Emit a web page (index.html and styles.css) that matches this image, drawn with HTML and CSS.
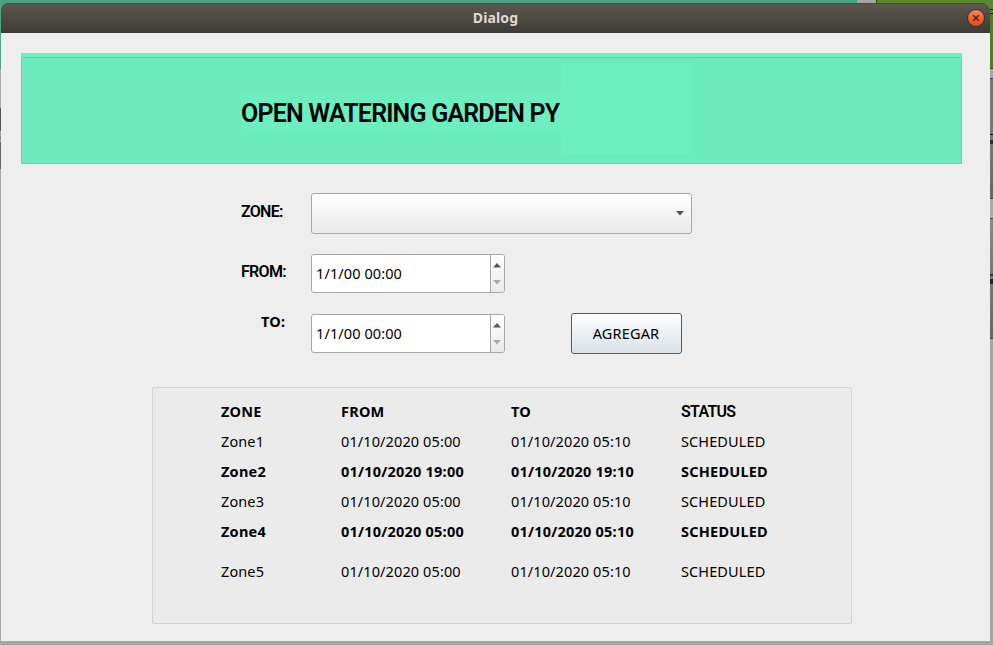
FILE: index.html
```
<!DOCTYPE html>
<html lang="en">
<head>
<meta charset="utf-8">
<title>Dialog</title>
<link rel="stylesheet" href="styles.css">
</head>
<body>
<div class="desktop">
  <div class="edge-left"></div>
  <main class="window">
    <header class="titlebar">
      <span class="window-title">Dialog</span>
      <button class="close" aria-label="Close"><svg width="8" height="8" viewBox="0 0 8 8"><path d="M1.2 1.2 6.8 6.8M6.8 1.2 1.2 6.8" stroke="#5b2410" stroke-width="1.5"/></svg></button>
    </header>
    <div class="content">
      <section class="banner">
        <div class="banner-frame">
          <h1 class="brand"><span class="brand-text">OPEN WATERING GARDEN PY</span></h1>
          <div class="logo-slot"></div>
        </div>
      </section>
      <form class="form">
        <div class="field zone-field">
          <label class="label zone-label">ZONE:</label>
          <div class="combo"><svg width="8" height="5" viewBox="0 0 8 5"><path d="M0 0H8L4 4.5Z" fill="#555"/></svg></div>
        </div>
        <div class="field">
          <label class="label from-label">FROM:</label>
          <div class="spin"><span class="value">1/1/00 00:00</span><span class="arrows"><svg width="8" height="5" viewBox="0 0 8 5"><path d="M0 4.5H8L4 0Z" fill="#555"/></svg><svg width="8" height="5" viewBox="0 0 8 5"><path d="M0 0H8L4 4.5Z" fill="#aaa"/></svg></span></div>
        </div>
        <div class="field">
          <label class="label to-label">TO:</label>
          <div class="spin"><span class="value">1/1/00 00:00</span><span class="arrows"><svg width="8" height="5" viewBox="0 0 8 5"><path d="M0 4.5H8L4 0Z" fill="#555"/></svg><svg width="8" height="5" viewBox="0 0 8 5"><path d="M0 0H8L4 4.5Z" fill="#aaa"/></svg></span></div>
          <button class="add" type="button">AGREGAR</button>
        </div>
      </form>
      <section class="schedule">
        <div class="row bold head"><span>ZONE</span><span>FROM</span><span>TO</span><span class="status-head">STATUS</span></div>
        <div class="row"><span>Zone1</span><span>01/10/2020 05:00</span><span>01/10/2020 05:10</span><span>SCHEDULED</span></div>
        <div class="row bold"><span>Zone2</span><span>01/10/2020 19:00</span><span>01/10/2020 19:10</span><span>SCHEDULED</span></div>
        <div class="row"><span>Zone3</span><span>01/10/2020 05:00</span><span>01/10/2020 05:10</span><span>SCHEDULED</span></div>
        <div class="row bold"><span>Zone4</span><span>01/10/2020 05:00</span><span>01/10/2020 05:10</span><span>SCHEDULED</span></div>
        <div class="row last"><span>Zone5</span><span>01/10/2020 05:00</span><span>01/10/2020 05:10</span><span>SCHEDULED</span></div>
      </section>
    </div>
  </main>
  <div class="edge-right"></div>
</div>
</body>
</html>
```
FILE: styles.css
```
* { box-sizing: border-box; }
body {
  margin: 0;
  width: 993px;
  height: 645px;
  overflow: hidden;
  font-family: "Noto Sans", sans-serif;
  font-size: 14.5px;
  color: #000;
}
.desktop {
  display: grid;
  grid-template-columns: 1px 989px 3px;
  grid-template-rows: 638px;
  height: 645px;
  padding-top: 3px;
  background:
    linear-gradient(90deg, #4aa584 857px, #a6a6a6 857px 876px, #284d10 876px 877px, #55892a 877px) 0 0 / 100% 14px no-repeat,
    #a5a5a5;
}
.edge-left {
  background: linear-gradient(#4aa584 66px, #aaa 66px 105px, #555 105px 128px, #b39a83 128px 133px, #6e8aa8 133px 137px, #aaa 137px 139px, #666 139px 166px, #a5a5a5 166px);
}
.edge-right {
  background: linear-gradient(#55892a 6px, #111 6px 7px, #55892a 7px 10px, #111 10px 11px, #4f7d26 11px 65px, #284d10 65px 66px, #a6a6a6 66px 75px, #444 75px 76px, #777 76px 131px, #111 131px 132px, #777 132px 137px, #16344f 137px 141px, #777 141px 142px, #666 195px, #444 195px 196px, #aaa 196px 215px, #444 215px 216px, #888 216px, #777 271px, #16344f 271px 273px, #777 273px 276px, #222 276px 281px, #777 281px, #666 335px, #444 335px 336px, #a5a5a5 336px);
}
.window {
  border-radius: 6px 6px 0 0;
  background: #eee;
  overflow: hidden;
}
.titlebar {
  height: 30px;
  display: grid;
  grid-template-columns: 26px 1fr 26px;
  align-items: center;
  justify-items: center;
  padding-bottom: 1px;
  background: linear-gradient(#5c584f, #3d3b36);
  border-top: 1px solid #48473f;
}
.window-title {
  grid-column: 2;
  font-size: 14px;
  line-height: 26px;
  font-weight: 700;
  letter-spacing: 0.15px;
  color: #dfdbd2;
}
.close {
  display: flex;
  align-items: center;
  justify-content: center;
  width: 18px;
  height: 18px;
  margin-right: 2px;
  padding: 0;
  border: 1px solid #35322d;
  border-radius: 50%;
  background: linear-gradient(#f58560, #ef6236 50%, #e14d1c);
}
.content { padding: 20px 28px 0 20px; }
.banner {
  height: 111px;
  padding-top: 4px;
  background: #6cf0c0;
}
.banner-frame {
  height: 107px;
  display: flex;
  padding: 5px 0 0 219px;
  border: 1px solid #62d2ab;
  border-radius: 2px;
  background: #6cebbf;
}
.brand {
  width: 320px;
  height: 41px;
  margin: 30px 0 0;
  background: #6ceec0;
  font: 600 25px/41px Roboto, sans-serif;
  letter-spacing: -0.8px;
  white-space: nowrap;
}
.logo-slot {
  width: 131px;
  height: 91px;
  background: #6cefc1;
}
.form {
  display: grid;
  row-gap: 20px;
  padding: 29px 0 0 220px;
}
.field {
  display: flex;
  height: 40px;
  align-items: flex-start;
}
.zone-field { height: 41px; }
.label { width: 70px; }
.zone-label, .from-label {
  font: 600 16px/37px Roboto, sans-serif;
  letter-spacing: -0.7px;
}
.from-label { line-height: 36px; }
.to-label {
  width: 50px;
  margin-left: 20px;
  line-height: 15px;
  font-weight: 700;
  letter-spacing: 0.2px;
}
.combo {
  width: 381px;
  height: 41px;
  display: flex;
  align-items: center;
  justify-content: flex-end;
  padding-right: 7px;
  border: 1px solid #a8a8a8;
  border-radius: 3px;
  background: linear-gradient(#fff, #eaeaea);
}
.spin {
  display: flex;
  width: 194px;
  height: 39px;
  border: 1px solid #a8a8a8;
  border-radius: 3px;
  background: #fff;
  overflow: hidden;
}
.value {
  flex: 1;
  padding-left: 4px;
  line-height: 36px;
  letter-spacing: 0.1px;
}
.arrows {
  width: 14px;
  display: flex;
  flex-direction: column;
  align-items: flex-start;
  gap: 12px;
  padding: 8px 0 0 2px;
  border-left: 1px solid #a8a8a8;
  background: linear-gradient(#fff, #eaeaea);
}
.add {
  width: 111px;
  height: 41px;
  margin: -1px 0 0 66px;
  padding: 0 1px 1px 0;
  border: 1px solid #1f6a9c;
  border-radius: 3px;
  background: linear-gradient(#fdfeff, #dae2e8);
  color: #000;
  font: 14.5px "Noto Sans", sans-serif;
  letter-spacing: 0.15px;
}
.schedule {
  width: 700px;
  height: 237px;
  margin: 33px 0 0 131px;
  padding: 8px 0 0 68px;
  border: 1px solid #d3d3d3;
  border-radius: 2px;
  background: #ebebeb;
}
.row {
  display: grid;
  grid-template-columns: 120px 170px 170px 1fr;
  height: 30px;
  line-height: 30px;
  white-space: nowrap;
  letter-spacing: 0.11px;
}
.bold {
  font-weight: 700;
  letter-spacing: 0.22px;
}
.last { margin-top: 10px; }
.status-head {
  font: 600 16px/31px Roboto, sans-serif;
  letter-spacing: -0.7px;
}
```
